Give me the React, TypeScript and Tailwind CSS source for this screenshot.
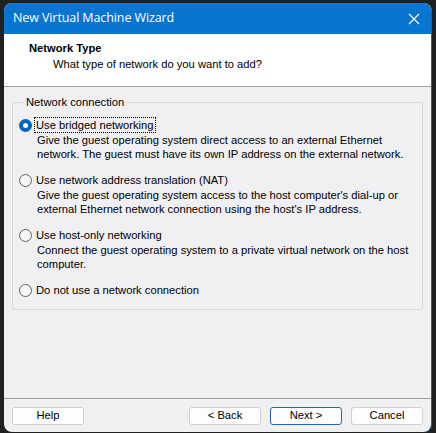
import React from 'react'

type Option = {
  id: string
  label: string
  lines: string[]
}

const options: Option[] = [
  {
    id: 'bridged',
    label: 'Use bridged networking',
    lines: [
      'Give the guest operating system direct access to an external Ethernet',
      'network. The guest must have its own IP address on the external network.',
    ],
  },
  {
    id: 'nat',
    label: 'Use network address translation (NAT)',
    lines: [
      "Give the guest operating system access to the host computer's dial-up or",
      "external Ethernet network connection using the host's IP address.",
    ],
  },
  {
    id: 'hostonly',
    label: 'Use host-only networking',
    lines: [
      'Connect the guest operating system to a private virtual network on the host',
      'computer.',
    ],
  },
  {
    id: 'none',
    label: 'Do not use a network connection',
    lines: [],
  },
]

function Radio({ checked }: { checked: boolean }) {
  if (checked) {
    return (
      <span className="w-[13px] h-[13px] rounded-full bg-[#0067c0] flex items-center justify-center shrink-0">
        <span className="w-[5px] h-[5px] rounded-full bg-white"></span>
      </span>
    )
  }
  return <span className="w-[13px] h-[13px] rounded-full border border-[#5f5f5f] bg-[#f7f7f7] shrink-0"></span>
}

function WizButton({ label, primary }: { label: string; primary?: boolean }) {
  return (
    <button
      className={
        primary
          ? 'w-[72px] h-[18px] rounded-[3px] border border-[#1b67b8] bg-[#fdfdfd] text-[11.2px] leading-none text-black'
          : 'w-[72px] h-[18px] rounded-[3px] border border-[#d0d0d0] bg-[#fdfdfd] text-[11.2px] leading-none text-black'
      }
    >
      {label}
    </button>
  )
}

export default function App() {
  const selected = 'bridged'

  return (
    <div className="w-[436px] h-[433px] bg-[#202020] pt-[3px] pl-[4px] font-['Liberation_Sans',Arial,sans-serif]">
      <div className="w-[428px] h-[429px] rounded-[8px] overflow-hidden flex flex-col bg-[#f0eff2] border-r border-[#2c5f93]">
        {/* Title bar */}
        <div className="h-[31px] bg-[#0a74d1] flex items-center justify-between pl-[9px] pr-[11px] shrink-0">
          <span className="text-white text-[12.5px] font-['Open_Sans','Liberation_Sans',sans-serif] tracking-[-0.1px]">
            New Virtual Machine Wizard
          </span>
          <svg width="12" height="12" viewBox="0 0 12 12" className="text-white">
            <path d="M1 1 L11 11 M11 1 L1 11" stroke="currentColor" strokeWidth="1.1" />
          </svg>
        </div>

        {/* Header */}
        <div className="h-[53px] bg-white border-b border-[#a0a0a0] shrink-0 pt-[7px]">
          <div className="pl-[25px] text-[11.2px] font-bold leading-[14px] text-black">Network Type</div>
          <div className="pl-[49px] mt-[2px] text-[11.2px] leading-[14px] text-black">
            What type of network do you want to add?
          </div>
        </div>

        {/* Body */}
        <div className="flex-1 px-[8px] pt-[8px]">
          <fieldset className="border border-[#d8d7da] rounded-[2px] h-[215px] pl-[6px] pt-[8px]">
            <legend className="ml-[5px] px-[2px] text-[11.2px] leading-[14px] text-black">Network connection</legend>
            <div className="flex flex-col gap-[11px]">
              {options.map((o) => (
                <div key={o.id}>
                  <div className="h-[16px] flex items-center">
                    <Radio checked={o.id === selected} />
                    <span
                      className={
                        o.id === selected
                          ? 'ml-[3px] px-[1px] text-[11.2px] leading-[14px] text-black outline outline-1 outline-dotted outline-[#000]'
                          : 'ml-[3px] px-[1px] text-[11.2px] leading-[14px] text-black'
                      }
                    >
                      {o.label}
                    </span>
                  </div>
                  {o.lines.length > 0 && (
                    <div className="pl-[18px] mt-[1px] text-[11.2px] leading-[13.5px] text-black">
                      {o.lines.map((l) => (
                        <div key={l}>{l}</div>
                      ))}
                    </div>
                  )}
                </div>
              ))}
            </div>
          </fieldset>
        </div>

        {/* Footer */}
        <div className="h-[34px] border-t border-[#a0a0a0] shrink-0 flex items-start pt-[8px] px-[8px]">
          <WizButton label="Help" />
          <div className="flex-1"></div>
          <div className="flex gap-[9px]">
            <WizButton label="< Back" />
            <WizButton label="Next >" primary />
            <WizButton label="Cancel" />
          </div>
        </div>
      </div>
    </div>
  )
}
